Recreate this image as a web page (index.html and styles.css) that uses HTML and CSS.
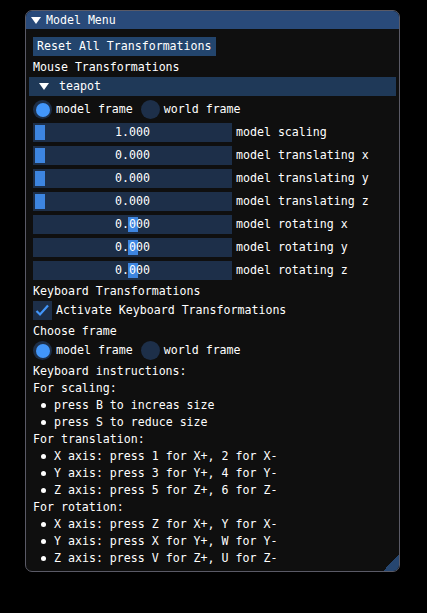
FILE: index.html
```html
<!DOCTYPE html>
<html>
<head>
<meta charset="utf-8">
<link rel="stylesheet" href="styles.css">
</head>
<body>
<div class="window">
  <div class="titlebar">
    <svg class="arrow" width="10" height="7" viewBox="0 0 10 7"><polygon points="0,0 10,0 5,7" fill="#fff"/></svg>
    <span>Model Menu</span>
  </div>
  <div class="content">
    <div class="row"><button class="btn">Reset All Transformations</button></div>
    <div class="text">Mouse Transformations</div>
    <div class="header">
      <svg class="arrow" width="10" height="7" viewBox="0 0 10 7"><polygon points="0,0 10,0 5,7" fill="#fff"/></svg>
      <span>teapot</span>
    </div>
    <div class="row radios">
      <div class="radio"><span class="circle on"><span class="dot"></span></span><span>model frame</span></div>
      <div class="radio"><span class="circle"></span><span>world frame</span></div>
    </div>
    <div class="row slider-row"><div class="slider"><span class="grab" style="left:2px"></span><span class="val">1.000</span></div><span class="lbl">model scaling</span></div>
    <div class="row slider-row"><div class="slider"><span class="grab" style="left:2px"></span><span class="val">0.000</span></div><span class="lbl">model translating x</span></div>
    <div class="row slider-row"><div class="slider"><span class="grab" style="left:2px"></span><span class="val">0.000</span></div><span class="lbl">model translating y</span></div>
    <div class="row slider-row"><div class="slider"><span class="grab" style="left:2px"></span><span class="val">0.000</span></div><span class="lbl">model translating z</span></div>
    <div class="row slider-row"><div class="slider"><span class="grab" style="left:95px"></span><span class="val">0.000</span></div><span class="lbl">model rotating x</span></div>
    <div class="row slider-row"><div class="slider"><span class="grab" style="left:95px"></span><span class="val">0.000</span></div><span class="lbl">model rotating y</span></div>
    <div class="row slider-row"><div class="slider"><span class="grab" style="left:95px"></span><span class="val">0.000</span></div><span class="lbl">model rotating z</span></div>
    <div class="text">Keyboard Transformations</div>
    <div class="row check">
      <span class="box"><svg width="19" height="19" viewBox="0 0 19 19"><polyline points="3.5,10 7,13.5 15,4.5" fill="none" stroke="#4296fa" stroke-width="2.2"/></svg></span>
      <span>Activate Keyboard Transformations</span>
    </div>
    <div class="text">Choose frame</div>
    <div class="row radios">
      <div class="radio"><span class="circle on"><span class="dot"></span></span><span>model frame</span></div>
      <div class="radio"><span class="circle"></span><span>world frame</span></div>
    </div>
    <div class="text">Keyboard instructions:</div>
    <div class="text">For scaling:</div>
    <div class="bullet">press B to increas size</div>
    <div class="bullet">press S to reduce size</div>
    <div class="text">For translation:</div>
    <div class="bullet">X axis: press 1 for X+, 2 for X-</div>
    <div class="bullet">Y axis: press 3 for Y+, 4 for Y-</div>
    <div class="bullet">Z axis: press 5 for Z+, 6 for Z-</div>
    <div class="text">For rotation:</div>
    <div class="bullet">X axis: press Z for X+, Y for X-</div>
    <div class="bullet">Y axis: press X for Y+, W for Y-</div>
    <div class="bullet">Z axis: press V for Z+, U for Z-</div>
  </div>
  <div class="grip"></div>
</div>
</body>
</html>
```
FILE: styles.css
```css
* { box-sizing: border-box; }
html, body { margin: 0; padding: 0; background: #000; }
body {
  width: 427px;
  height: 613px;
  padding: 10px 0 0 25px;
  font-family: "DejaVu Sans Mono", "Liberation Mono", monospace;
  font-size: 11.6px;
  line-height: 13px;
  color: #fff;
}
.window {
  position: relative;
  width: 375px;
  border: 1px solid #5a5a66;
  border-radius: 7px;
  background: #0f0f0f;
  overflow: hidden;
}
.titlebar {
  height: 18px;
  background: #294a7a;
  display: flex;
  align-items: center;
  padding-left: 5px;
  gap: 5px;
}
.arrow { display: block; flex: none; }
.content {
  padding: 8px 7px 7px 7px;
  display: flex;
  flex-direction: column;
  gap: 4px;
}
.row { display: flex; align-items: center; height: 19px; }
.text { height: 13px; line-height: 15px; white-space: pre; }
.btn {
  font: inherit;
  color: #fff;
  background: #23456d;
  border: none;
  height: 19px;
  padding: 0 4px;
  margin: 0;
}
.header {
  margin: 0 -4px;
  height: 19px;
  background: #1f3958;
  display: flex;
  align-items: center;
  padding-left: 10px;
  gap: 10px;
}
.radios { gap: 8px; }
.radio { display: flex; align-items: center; gap: 4px; }
.circle {
  width: 19px;
  height: 19px;
  border-radius: 50%;
  background: #1d2f49;
  display: flex;
  align-items: center;
  justify-content: center;
}
.circle .dot {
  width: 14px;
  height: 14px;
  border-radius: 50%;
  background: #4296fa;
}
.slider-row { gap: 4px; }
.slider {
  position: relative;
  width: 199px;
  height: 19px;
  background: #1d2f49;
  display: flex;
  align-items: center;
  justify-content: center;
}
.grab {
  position: absolute;
  top: 2px;
  bottom: 2px;
  width: 10px;
  background: #3d85e0;
}
.val { position: relative; }
.check { gap: 4px; }
.box {
  width: 19px;
  height: 19px;
  background: #1d2f49;
  display: block;
}
.box svg { display: block; }
.bullet {
  height: 13px;
  line-height: 15px;
  position: relative;
  padding-left: 21px;
  white-space: pre;
}
.bullet::before {
  content: "";
  position: absolute;
  left: 8px;
  top: 5px;
  width: 5px;
  height: 5px;
  border-radius: 50%;
  background: #fff;
}
.grip {
  position: absolute;
  right: 0;
  bottom: 0;
  width: 16px;
  height: 16px;
  background: linear-gradient(to top left, #264670 50%, transparent 50%);
}
```
